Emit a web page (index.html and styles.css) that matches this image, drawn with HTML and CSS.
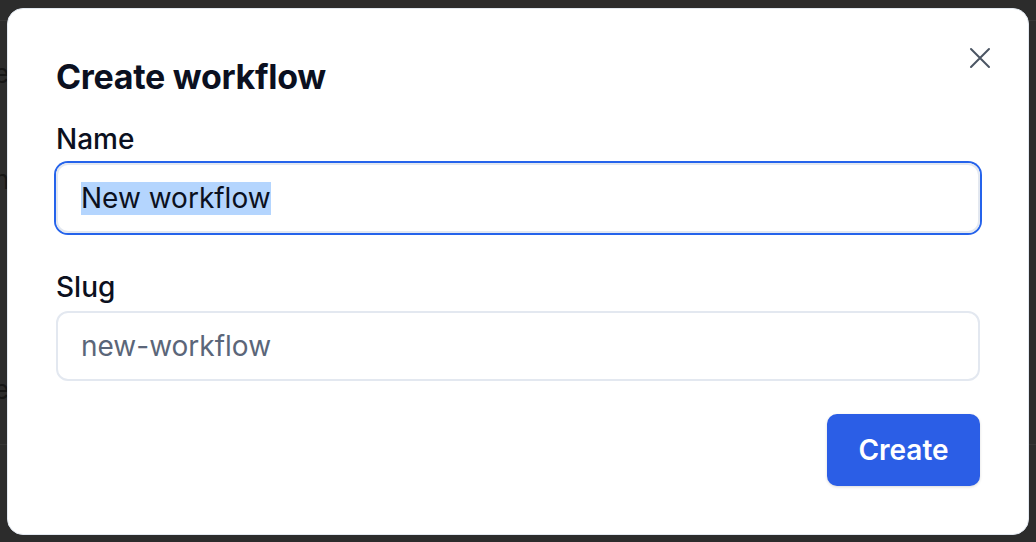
FILE: index.html
```html
<!DOCTYPE html>
<html lang="en">
<head>
<meta charset="utf-8">
<title>Create workflow</title>
<link rel="stylesheet" href="styles.css">
</head>
<body>
<div class="backdrop">
  <div class="behind">
    <div class="rule r1"></div>
    <div class="rule r2"></div>
    <span class="ghost g1">e</span>
    <span class="ghost g2">n</span>
    <span class="ghost g3">e</span>
  </div>
  <div class="modal">
    <button class="close" aria-label="Close">
      <svg width="24" height="24" viewBox="0 0 24 24" fill="none" stroke="#4b5563" stroke-width="2" stroke-linecap="round"><path d="M3 3L21 21M21 3L3 21"/></svg>
    </button>
    <h1 class="title">Create workflow</h1>
    <div class="field">
      <label class="label">Name</label>
      <div class="input focused"><span class="sel">New workflow</span></div>
    </div>
    <div class="field slug">
      <label class="label">Slug</label>
      <div class="input"><span class="placeholder">new-workflow</span></div>
    </div>
    <div class="actions">
      <button class="btn">Create</button>
    </div>
  </div>
</div>
</body>
</html>
```

FILE: styles.css
```css
* { box-sizing: border-box; }
html, body { margin: 0; padding: 0; }
body {
  width: 1036px;
  height: 542px;
  overflow: hidden;
  background: #2c2c2c;
  font-family: Inter, "Noto Sans", sans-serif;
}
.backdrop {
  position: relative;
  width: 1036px;
  height: 542px;
  padding: 8px 7px 7px 7px;
}
.behind { position: absolute; inset: 0; }
.rule {
  position: absolute;
  left: 0;
  right: 0;
  height: 1px;
  background: #363636;
}
.r1 { top: 20px; }
.r2 { top: 444px; }
.ghost {
  position: absolute;
  left: -6px;
  color: #161616;
  font-size: 26px;
}
.g1 { top: 58px; }
.g2 { top: 164px; }
.g3 { top: 374px; }
.modal {
  position: relative;
  width: 1022px;
  height: 527px;
  background: #fff;
  border: 1px solid #e2e8f0;
  border-radius: 16px;
  padding: 48px 48px 48px 48px;
  display: flex;
  flex-direction: column;
}
.close {
  position: absolute;
  top: 37px;
  right: 36px;
  width: 24px;
  height: 24px;
  padding: 0;
  border: 0;
  background: none;
  display: flex;
}
.title {
  margin: 0 0 25px 0;
  font-size: 34px;
  line-height: 40px;
  font-weight: 700;
  color: #0b1020;
  letter-spacing: -0.3px;
}
.field {
  display: flex;
  flex-direction: column;
  gap: 7px;
}
.field.slug { margin-top: 37px; }
.label {
  font-size: 28px;
  line-height: 34px;
  font-weight: 500;
  color: #0b1020;
}
.input {
  height: 70px;
  border: 2px solid #e3e8f0;
  border-radius: 12px;
  padding: 0 23px;
  display: flex;
  align-items: center;
  font-size: 28px;
}
.input.focused {
  box-shadow: 0 0 0 2px #2563eb;
}
.sel {
  background: #b4d5fe;
  color: #0b1020;
  line-height: 33px;
}
.placeholder { color: #5b6679; }
.actions {
  margin-top: auto;
  display: flex;
  justify-content: flex-end;
}
.btn {
  width: 153px;
  height: 72px;
  border: 0;
  border-radius: 10px;
  background: #2b5ee6;
  color: #fff;
  font-family: Inter, "Noto Sans", sans-serif;
  font-size: 28px;
  font-weight: 600;
  box-shadow: 0 1px 3px rgba(0,0,0,0.15);
}
```
